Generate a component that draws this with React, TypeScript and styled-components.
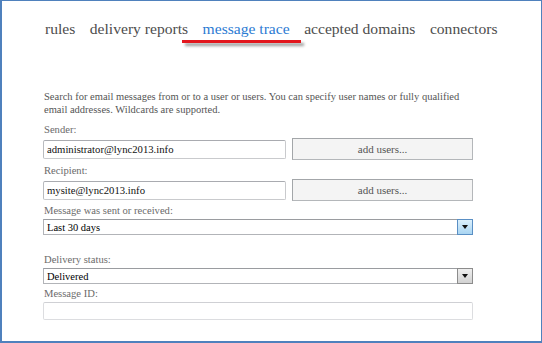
import React from "react";
import styled, { createGlobalStyle } from "styled-components";

const Global = createGlobalStyle`
  html, body {
    margin: 0;
    padding: 0;
    background: #ffffff;
    font-family: "Liberation Serif", "Times New Roman", serif;
  }
  * {
    box-sizing: border-box;
  }
`;

const tabs = ["rules", "delivery reports", "message trace", "accepted domains", "connectors"];

const App = () => {
  return (
    <>
      <Global />
      <Frame>
        <TabBar>
          {tabs.map((t) => (
            <Tab key={t} $active={t === "message trace"}>
              {t}
            </Tab>
          ))}
        </TabBar>
        <Form>
          <Description>
            Search for email messages from or to a user or users. You can specify user names or fully qualified
            email addresses. Wildcards are supported.
          </Description>
          <Label $mt={7}>Sender:</Label>
          <Row>
            <TextBox readOnly value="administrator@lync2013.info" />
            <AddButton>add users...</AddButton>
          </Row>
          <Label $mt={4}>Recipient:</Label>
          <Row>
            <TextBox readOnly value="mysite@lync2013.info" />
            <AddButton>add users...</AddButton>
          </Row>
          <Label $mt={3}>Message was sent or received:</Label>
          <Select>
            <span>Last 30 days</span>
            <DropButton $focused>
              <Arrow />
            </DropButton>
          </Select>
          <Label $mt={18}>Delivery status:</Label>
          <Select>
            <span>Delivered</span>
            <DropButton>
              <Arrow />
            </DropButton>
          </Select>
          <Label $mt={3}>Message ID:</Label>
          <IdBox readOnly value="" />
        </Form>
      </Frame>
    </>
  );
};

export default App;

const Frame = styled.div`
  width: 542px;
  height: 343px;
  border: 1px solid #4f81bd;
  border-left-width: 2px;
  border-bottom-width: 2px;
  background: #ffffff;
  font-family: "Liberation Serif", "Times New Roman", serif;
  overflow: hidden;
`;

const TabBar = styled.div`
  display: flex;
  padding: 18px 0 0 35.75px;
  height: 47px;
`;

const Tab = styled.div<{ $active?: boolean }>`
  position: relative;
  padding: 0 7.25px;
  font-size: 15.6px;
  line-height: 20px;
  color: ${(p) => (p.$active ? "#2b7bd3" : "#4d4d4d")};
  white-space: nowrap;

  &::after {
    content: "";
    display: ${(p) => (p.$active ? "block" : "none")};
    position: absolute;
    left: -13.75px;
    right: -3.75px;
    top: 21px;
    height: 3px;
    background: #e3161d;
    box-shadow: 3px 3px 3px rgba(0, 0, 0, 0.4);
  }
`;

const Form = styled.div`
  display: flex;
  flex-direction: column;
  width: 473px;
  padding: 42px 0 0 41px;
`;

const Description = styled.p`
  margin: 0 0 0 1px;
  font-size: 10.5px;
  line-height: 13px;
  color: #555555;
`;

const Label = styled.div<{ $mt: number }>`
  margin: ${(p) => p.$mt}px 0 1px 1px;
  font-size: 10.6px;
  line-height: 14px;
  color: #6b6b6b;
`;

const Row = styled.div`
  display: flex;
  align-items: center;
  gap: 6px;
`;

const TextBox = styled.input`
  width: 243px;
  height: 19px;
  padding: 0 3px;
  border: 1px solid #c9cacd;
  border-top-color: #a9abb0;
  border-left-color: #b9bbbf;
  border-radius: 2px;
  font-family: "Liberation Serif", "Times New Roman", serif;
  font-size: 10.7px;
  color: #111111;
  outline: none;
`;

const AddButton = styled.div`
  display: flex;
  align-items: center;
  justify-content: center;
  width: 181px;
  height: 22px;
  border: 1px solid #a3a6a9;
  border-right-color: #b4b7ba;
  border-bottom-color: #b4b7ba;
  background: #f4f4f4;
  font-size: 11px;
  color: #555555;
`;

const Select = styled.div`
  display: flex;
  align-items: center;
  justify-content: space-between;
  width: 430px;
  height: 16px;
  padding-left: 3px;
  border: 1px solid #b2b4b8;
  border-top-color: #9a9ca0;
  font-size: 10.5px;
  color: #000000;
`;

const DropButton = styled.div<{ $focused?: boolean }>`
  display: flex;
  align-items: center;
  justify-content: center;
  width: 16px;
  height: 16px;
  margin-right: -1px;
  border: 1px solid ${(p) => (p.$focused ? "#5a8fc4" : "#8c8c8c")};
  background: ${(p) =>
    p.$focused
      ? "linear-gradient(#dcf0fc, #a9d5f2)"
      : "linear-gradient(#eeeeee, #d2d2d2)"};
`;

const Arrow = styled.div`
  width: 0;
  height: 0;
  border-left: 3.5px solid transparent;
  border-right: 3.5px solid transparent;
  border-top: 4px solid #111111;
`;

const IdBox = styled.input`
  width: 430px;
  height: 18px;
  border: 1px solid #dcdde0;
  border-top-color: #cfd0d4;
  border-radius: 2px;
  outline: none;
`;
